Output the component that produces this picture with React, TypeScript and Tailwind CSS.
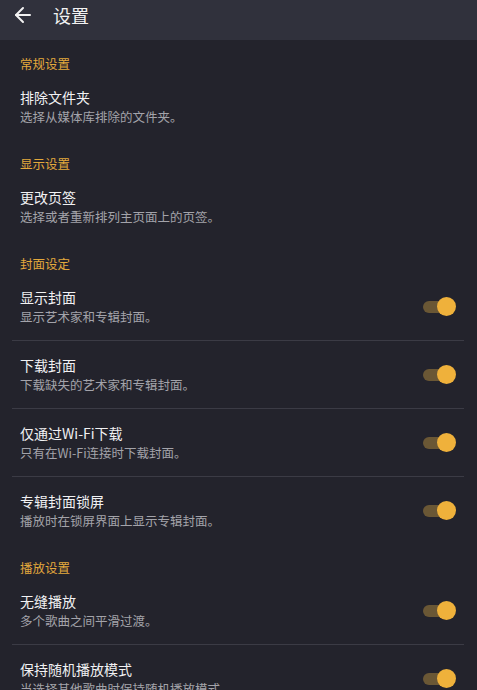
import { ArrowLeft } from "lucide-react";

type Item = { title: string; desc: string; toggle?: boolean };
type Section = { label: string; items: Item[] };

const sections: Section[] = [
  { label: "常规设置", items: [{ title: "排除文件夹", desc: "选择从媒体库排除的文件夹。" }] },
  { label: "显示设置", items: [{ title: "更改页签", desc: "选择或者重新排列主页面上的页签。" }] },
  {
    label: "封面设定",
    items: [
      { title: "显示封面", desc: "显示艺术家和专辑封面。", toggle: true },
      { title: "下载封面", desc: "下载缺失的艺术家和专辑封面。", toggle: true },
      { title: "仅通过Wi-Fi下载", desc: "只有在Wi-Fi连接时下载封面。", toggle: true },
      { title: "专辑封面锁屏", desc: "播放时在锁屏界面上显示专辑封面。", toggle: true },
    ],
  },
  {
    label: "播放设置",
    items: [
      { title: "无缝播放", desc: "多个歌曲之间平滑过渡。", toggle: true },
      { title: "保持随机播放模式", desc: "当选择其他歌曲时保持随机播放模式。", toggle: true },
    ],
  },
];

function Toggle() {
  return (
    <div className="relative w-[33px] h-[19px] shrink-0 mr-px">
      <span className="absolute left-0 top-[3.5px] w-[30px] h-3 rounded-full bg-[#6a5735]" />
      <span className="absolute right-0 top-0 w-[19px] h-[19px] rounded-full bg-[#efb13b]" />
    </div>
  );
}

export default function App() {
  return (
    <div
      className="w-[477px] h-[690px] overflow-hidden bg-[#23232c] text-white"
      style={{ fontFamily: '"Noto Sans CJK SC", "Noto Sans", sans-serif' }}
    >
      <div className="h-10 bg-[#30313c] flex items-center pb-[10px]">
        <ArrowLeft className="ml-[11px] text-[#f2f2f2]" size={24} strokeWidth={2} />
        <span className="ml-[18px] text-[18px] leading-6 text-[#f2f2f2]">设置</span>
      </div>

      {sections.map((s) => (
        <div key={s.label} className="pt-[15px]">
          <p className="px-5 text-[12.5px] leading-[18px] text-[#e3a93c]">{s.label}</p>
          {s.items.map((it, i) => (
            <div key={it.title}>
              {i > 0 && <div className="ml-3 mr-[13px] h-px bg-[#3b3b45]" />}
              <div className="flex items-center px-5 py-[14px]">
                <div className="flex-1 min-w-0">
                  <p className="text-[14px] leading-5 text-[#f1f1f3]">{it.title}</p>
                  <p className="text-[12.5px] leading-[19px] text-[#a3a3aa]">{it.desc}</p>
                </div>
                {it.toggle && <Toggle />}
              </div>
            </div>
          ))}
        </div>
      ))}
    </div>
  );
}
